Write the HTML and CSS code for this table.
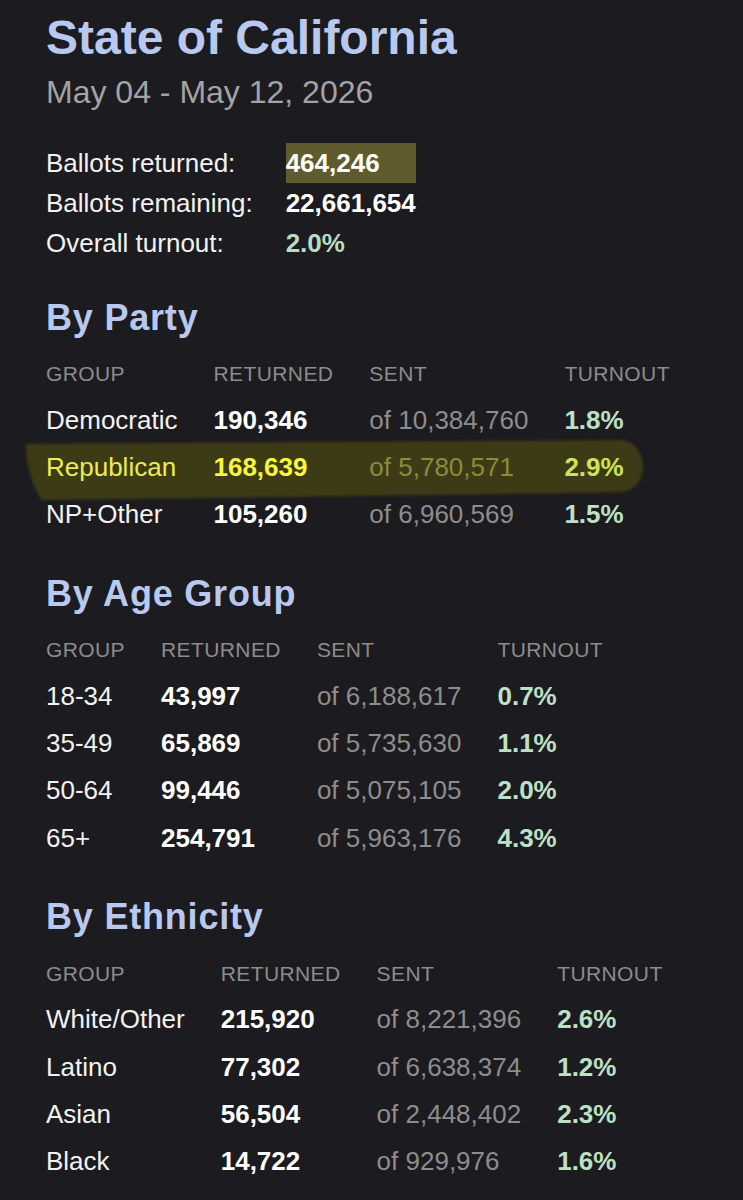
FILE: index.html
```html
<!DOCTYPE html>
<html lang="en">
<head>
<meta charset="utf-8">
<title>State of California</title>
<link rel="stylesheet" href="styles.css">
</head>
<body>
<main class="page">
  <h1 class="title">State of California</h1>
  <div class="dates">May 04 - May 12, 2026</div>

  <div class="summary">
    <div class="s-label">Ballots returned:</div>
    <div class="s-value s-mark">464,246</div>
    <div class="s-label">Ballots remaining:</div>
    <div class="s-value">22,661,654</div>
    <div class="s-label">Overall turnout:</div>
    <div class="s-value s-pct">2.0%</div>
  </div>

  <h2 class="heading">By Party</h2>
  <div class="table-wrap">
    <svg class="marker" width="640" height="74" viewBox="0 0 640 74" aria-hidden="true">
      <defs>
        <filter id="soft" x="-5%" y="-30%" width="110%" height="160%">
          <feGaussianBlur stdDeviation="1.6"/>
        </filter>
      </defs>
      <path filter="url(#soft)" fill="#3c3b18" d="M 6 10 C 120 9, 380 8, 598 6 C 630 6, 632 56, 600 58 C 420 61, 180 64, 22 66 C 12 52, 6 30, 6 10 Z"/>
    </svg>
    <div class="grid">
      <div class="th">GROUP</div><div class="th">RETURNED</div><div class="th">SENT</div><div class="th">TURNOUT</div>
      <div class="td">Democratic</div><div class="td num">190,346</div><div class="td sent">of 10,384,760</div><div class="td pct">1.8%</div>
      <div class="td hl">Republican</div><div class="td num hl-num">168,639</div><div class="td sent hl-sent">of 5,780,571</div><div class="td pct hl-pct">2.9%</div>
      <div class="td">NP+Other</div><div class="td num">105,260</div><div class="td sent">of 6,960,569</div><div class="td pct">1.5%</div>
    </div>
  </div>

  <h2 class="heading">By Age Group</h2>
  <div class="table-wrap">
    <div class="grid">
      <div class="th">GROUP</div><div class="th">RETURNED</div><div class="th">SENT</div><div class="th">TURNOUT</div>
      <div class="td">18-34</div><div class="td num">43,997</div><div class="td sent">of 6,188,617</div><div class="td pct">0.7%</div>
      <div class="td">35-49</div><div class="td num">65,869</div><div class="td sent">of 5,735,630</div><div class="td pct">1.1%</div>
      <div class="td">50-64</div><div class="td num">99,446</div><div class="td sent">of 5,075,105</div><div class="td pct">2.0%</div>
      <div class="td">65+</div><div class="td num">254,791</div><div class="td sent">of 5,963,176</div><div class="td pct">4.3%</div>
    </div>
  </div>

  <h2 class="heading">By Ethnicity</h2>
  <div class="table-wrap">
    <div class="grid">
      <div class="th">GROUP</div><div class="th">RETURNED</div><div class="th">SENT</div><div class="th">TURNOUT</div>
      <div class="td">White/Other</div><div class="td num">215,920</div><div class="td sent">of 8,221,396</div><div class="td pct">2.6%</div>
      <div class="td">Latino</div><div class="td num">77,302</div><div class="td sent">of 6,638,374</div><div class="td pct">1.2%</div>
      <div class="td">Asian</div><div class="td num">56,504</div><div class="td sent">of 2,448,402</div><div class="td pct">2.3%</div>
      <div class="td">Black</div><div class="td num">14,722</div><div class="td sent">of 929,976</div><div class="td pct">1.6%</div>
    </div>
  </div>
</main>
</body>
</html>
```

FILE: styles.css
```css
html, body {
  margin: 0;
  padding: 0;
  background: #1c1b1f;
}

body {
  font-family: "Liberation Sans", Arial, Helvetica, sans-serif;
  color: #f2f2f2;
}

.page {
  padding: 10px 0 40px 46px;
  min-height: 1150px;
}

.title {
  margin: 0;
  font-size: 48px;
  line-height: 56px;
  font-weight: 700;
  color: #b8c8ee;
}

.dates {
  margin-top: 6px;
  font-size: 32px;
  line-height: 40px;
  color: #a3a3a3;
}

.summary {
  margin-top: 30.5px;
  display: grid;
  grid-template-columns: max-content max-content;
  column-gap: 33px;
  font-size: 26px;
  line-height: 40px;
}

.s-label {
  color: #f2f2f2;
}

.s-value {
  font-weight: 700;
  color: #ffffff;
}

.s-mark {
  background: #5f5b2e;
}

.s-pct {
  color: #b9dcc3;
}

.heading {
  margin: 33.5px 0 0 0;
  font-size: 36px;
  line-height: 44px;
  font-weight: 700;
  letter-spacing: 0.8px;
  color: #b8c8ee;
}

.table-wrap {
  position: relative;
  margin-top: 12.4px;
}

.marker {
  position: absolute;
  left: -26px;
  top: 82px;
  z-index: 0;
}

.grid {
  position: relative;
  z-index: 1;
  display: grid;
  grid-template-columns: repeat(4, max-content);
  column-gap: 36px;
}

.th {
  font-size: 21px;
  line-height: 44.6px;
  letter-spacing: 0.4px;
  color: #8c8c8c;
}

.td {
  font-size: 26px;
  line-height: 47.2px;
  color: #f2f2f2;
}

.num {
  font-weight: 700;
  color: #ffffff;
}

.sent {
  color: #8d8d8d;
}

.pct {
  font-weight: 700;
  color: #bde0c6;
}

.hl {
  color: #ecec4c;
}

.hl-num {
  color: #f6f63a;
}

.hl-sent {
  color: #8c8a3c;
}

.hl-pct {
  color: #cce452;
}
```
